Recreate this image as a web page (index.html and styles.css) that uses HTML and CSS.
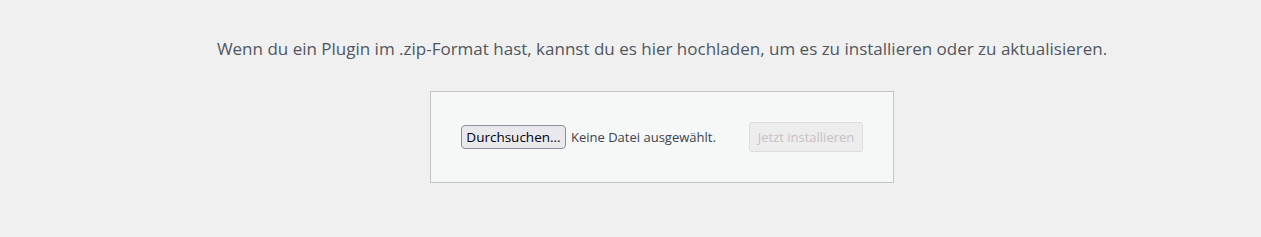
FILE: index.html
```html
<!DOCTYPE html>
<html lang="de">
<head>
    <meta charset="UTF-8">
    <meta name="viewport" content="width=device-width, initial-scale=1.0">
    <title>Plugin hochladen</title>
    <link rel="stylesheet" href="styles.css">
</head>
<body>
    <div class="upload-plugin">
        <p class="install-help">Wenn du ein Plugin im .zip-Format hast, kannst du es hier hochladen, um es zu installieren oder zu aktualisieren.</p>
        <form class="upload-form" method="post" enctype="multipart/form-data">
            <div class="file-field">
                <label class="file-btn" for="pluginzip">Durchsuchen...</label>
                <input type="file" id="pluginzip" name="pluginzip" accept=".zip">
                <span class="file-name">Keine Datei ausgewählt.</span>
            </div>
            <button type="submit" class="button" disabled>Jetzt installieren</button>
        </form>
    </div>
</body>
</html>
```

FILE: styles.css
```css
body {
    margin: 0;
    padding-left: 63px;
    background-color: #f0f0f1;
    font-family: "Open Sans", "Noto Sans", sans-serif;
    color: #3c434a;
}
.upload-plugin {
    text-align: center;
}
.install-help {
    margin: 0;
    padding: 36px 0 30px;
    font-size: 17px;
    line-height: 25px;
    color: #50575e;
}
.upload-form {
    display: inline-flex;
    justify-content: space-between;
    align-items: center;
    width: 402px;
    padding: 30px;
    background-color: #f6f7f7;
    border: 1px solid #c3c4c7;
}
.file-field {
    display: flex;
    align-items: center;
}
.file-field input {
    display: none;
}
.file-btn {
    box-sizing: border-box;
    width: 105px;
    height: 24px;
    line-height: 22px;
    font-size: 13.5px;
    color: #000;
    background-color: #e9e9ed;
    border: 1px solid #8f8f9d;
    border-radius: 4px;
}
.file-name {
    margin-left: 5px;
    font-size: 13px;
    color: #3c434a;
}
.button {
    box-sizing: border-box;
    width: 114px;
    height: 30px;
    padding: 0;
    font-family: inherit;
    font-size: 13px;
    color: #c8c0c4;
    background-color: #ededee;
    border: 1px solid #dcdcde;
    border-radius: 3px;
}
```
